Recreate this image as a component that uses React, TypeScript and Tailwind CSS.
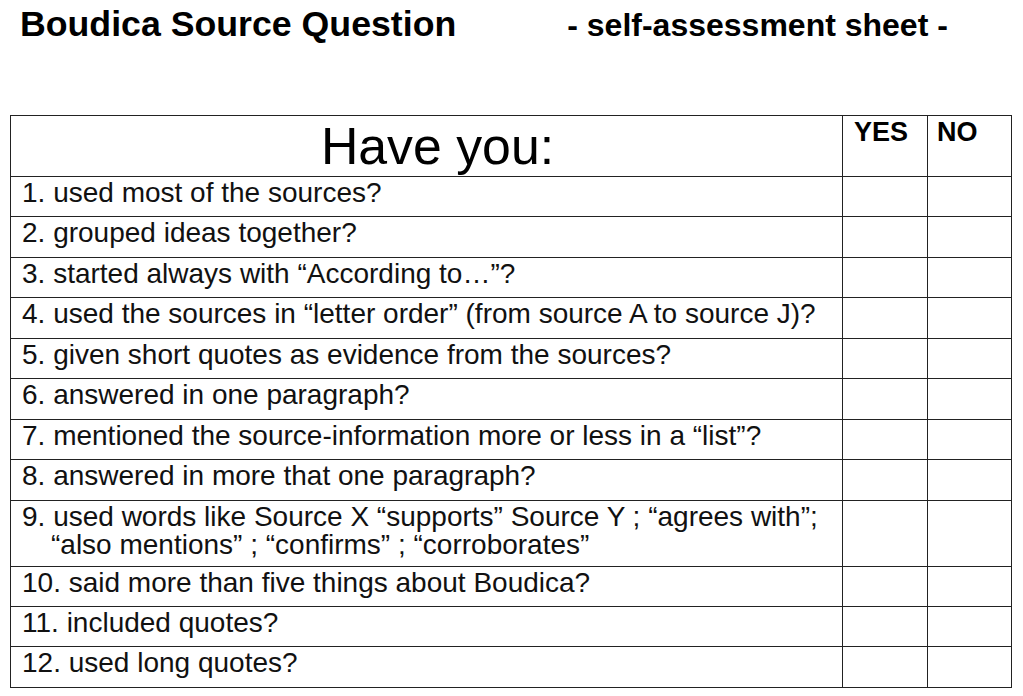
const items: { n: string; h: string; lines: string[] }[] = [
  { n: '1', h: 'h-[40px]', lines: ['1. used most of the sources?'] },
  { n: '2', h: 'h-[41px]', lines: ['2. grouped ideas together?'] },
  { n: '3', h: 'h-[40px]', lines: ['3. started always with “According to…”?'] },
  { n: '4', h: 'h-[41px]', lines: ['4. used the sources in “letter order” (from source A to source J)?'] },
  { n: '5', h: 'h-[40px]', lines: ['5. given short quotes as evidence from the sources?'] },
  { n: '6', h: 'h-[41px]', lines: ['6. answered in one paragraph?'] },
  { n: '7', h: 'h-[40px]', lines: ['7. mentioned the source-information more or less in a “list”?'] },
  { n: '8', h: 'h-[41px]', lines: ['8. answered in more that one paragraph?'] },
  {
    n: '9',
    h: 'h-[66px]',
    lines: [
      '9. used words like Source X “supports” Source Y ; “agrees with”;',
      '“also mentions” ; “confirms” ; “corroborates”',
    ],
  },
  { n: '10', h: 'h-[40px]', lines: ['10. said more than five things about Boudica?'] },
  { n: '11', h: 'h-[40px]', lines: ['11. included quotes?'] },
  { n: '12', h: 'h-[41px]', lines: ['12. used long quotes?'] },
]

export default function App() {
  return (
    <div className="min-h-screen bg-white text-black font-['Liberation_Sans',Arial,sans-serif]">
      {/* Title line */}
      <div className="flex items-start h-[115px] pt-[4px]">
        <h1 className="ml-[20px] text-[35.7px] font-bold leading-[40px]">Boudica Source Question</h1>
        <p className="ml-[111px] text-[32px] font-bold leading-[40px] pt-[1px]">- self-assessment sheet -</p>
      </div>

      {/* Checklist table */}
      <div className="ml-[10px] w-[1002px] border-l border-t border-r border-[#222]">
        <div className="flex h-[61px] border-b border-[#222]">
          <div className="w-[832px] border-r border-[#222] pt-[5px] pl-[22px] text-center text-[51.8px] leading-[50px]">
            Have you:
          </div>
          <div className="w-[85px] border-r border-[#222] pt-[3px] pl-[11px] text-[27px] font-bold leading-[26px]">
            YES
          </div>
          <div className="flex-1 pt-[3px] pl-[9px] text-[27px] font-bold leading-[26px]">NO</div>
        </div>
        {items.map((it) => (
          <div key={it.n} className={`flex ${it.h} border-b border-[#222]`}>
            <div className="w-[832px] border-r border-[#222] pt-[2px] pl-[11px] text-[28px] leading-[28px] text-[#111]">
              {it.lines.map((l, i) => (
                <div key={i} className={i > 0 ? 'pl-[29px]' : ''}>
                  {l}
                </div>
              ))}
            </div>
            <div className="w-[85px] border-r border-[#222]" />
            <div className="flex-1" />
          </div>
        ))}
      </div>
    </div>
  )
}
